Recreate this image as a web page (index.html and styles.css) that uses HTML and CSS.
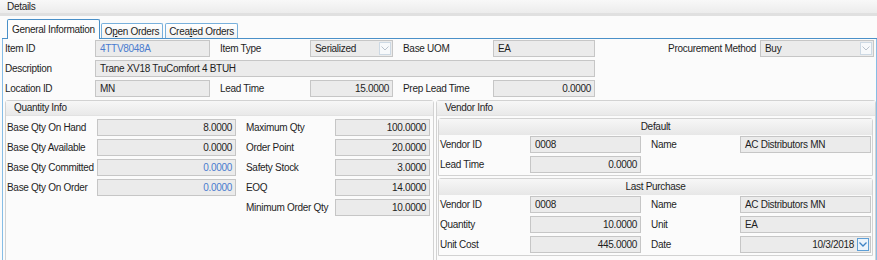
FILE: index.html
```html
<!DOCTYPE html>
<html lang="en">
<head>
  <meta charset="UTF-8">
  <title>Details</title>
  <link rel="stylesheet" href="styles.css">
</head>
<body>

<div class="titlebar">Details</div>

<!-- onglets -->
<div class="tabs">
  <div class="tab active">General Information</div>
  <div class="tab">O<u>p</u>en Orders</div>
  <div class="tab">Crea<u>t</u>ed Orders</div>
</div>

<div class="panel">
  <!-- infos article -->
  <div class="top-grid">
    <span class="lbl">Item ID</span>
    <div class="field link">4TTV8048A</div>
    <span class="lbl pad">Item Type</span>
    <div class="field combo">Serialized
      <span class="drop"><svg width="8" height="5" viewBox="0 0 8 5"><polyline points="0.5,0.5 4,4 7.5,0.5" fill="none" stroke="#b9c2cc" stroke-width="1"/></svg></span>
    </div>
    <span class="lbl pad">Base UOM</span>
    <div class="field">EA</div>
    <span></span>
    <span class="lbl right">Procurement Method</span>
    <div class="field combo">Buy
      <span class="drop"><svg width="8" height="5" viewBox="0 0 8 5"><polyline points="0.5,0.5 4,4 7.5,0.5" fill="none" stroke="#b9c2cc" stroke-width="1"/></svg></span>
    </div>

    <span class="lbl">Description</span>
    <div class="field wide">Trane XV18 TruComfort 4 BTUH</div>
    <span class="fill"></span>

    <span class="lbl">Location ID</span>
    <div class="field">MN</div>
    <span class="lbl pad">Lead Time</span>
    <div class="field num">15.0000</div>
    <span class="lbl pad">Prep Lead Time</span>
    <div class="field num">0.0000</div>
    <span class="fill"></span>
  </div>

  <div class="groups">
    <!-- Quantity Info -->
    <div class="group qty">
      <div class="group-head">Quantity Info</div>
      <div class="qty-grid">
        <span class="lbl">Base Qty On Hand</span>
        <div class="field num">8.0000</div>
        <span class="lbl pad">Maximum Qty</span>
        <div class="field num">100.0000</div>

        <span class="lbl">Base Qty Available</span>
        <div class="field num">0.0000</div>
        <span class="lbl pad">Order Point</span>
        <div class="field num">20.0000</div>

        <span class="lbl">Base Qty Committed</span>
        <div class="field num link">0.0000</div>
        <span class="lbl pad">Safety Stock</span>
        <div class="field num">3.0000</div>

        <span class="lbl">Base Qty On Order</span>
        <div class="field num link">0.0000</div>
        <span class="lbl pad">EOQ</span>
        <div class="field num">14.0000</div>

        <span></span>
        <span></span>
        <span class="lbl pad">Minimum Order Qty</span>
        <div class="field num">10.0000</div>
      </div>
    </div>

    <!-- Vendor Info -->
    <div class="group vendor">
      <div class="group-head">Vendor Info</div>

      <div class="subgroup">
        <div class="sub-head">Default</div>
        <div class="vendor-grid">
          <span class="lbl">Vendor ID</span>
          <div class="field">0008</div>
          <span class="lbl pad">Name</span>
          <div class="field">AC Distributors MN</div>

          <span class="lbl">Lead Time</span>
          <div class="field num">0.0000</div>
        </div>
      </div>

      <div class="subgroup">
        <div class="sub-head">Last Purchase</div>
        <div class="vendor-grid">
          <span class="lbl">Vendor ID</span>
          <div class="field">0008</div>
          <span class="lbl pad">Name</span>
          <div class="field">AC Distributors MN</div>

          <span class="lbl">Quantity</span>
          <div class="field num">10.0000</div>
          <span class="lbl pad">Unit</span>
          <div class="field">EA</div>

          <span class="lbl">Unit Cost</span>
          <div class="field num">445.0000</div>
          <span class="lbl pad">Date</span>
          <div class="field num date">10/3/2018
            <span class="drop blue"><svg width="8" height="5" viewBox="0 0 8 5"><polyline points="0.5,0.5 4,4 7.5,0.5" fill="none" stroke="#3d82c4" stroke-width="1.3"/></svg></span>
          </div>
        </div>
      </div>
    </div>
  </div>
</div>

</body>
</html>
```

FILE: styles.css
```css
body {
  margin: 0;
  background: #fbfbfb;
  font-family: "Liberation Sans", Arial, sans-serif;
  font-size: 10px;
  letter-spacing: -0.3px;
  color: #1e1e1e;
  overflow: hidden;
}

.titlebar {
  height: 13px;
  line-height: 14px;
  padding-left: 7px;
  background: linear-gradient(#f8f8f8, #ececec);
  border-bottom: 3px solid #e0e0e0;
}

/* onglets */
.tabs {
  display: flex;
  align-items: flex-end;
  margin: 3px 0 0 2px;
  padding-left: 5px;
  height: 19px;
  border-bottom: 1px solid #4a90c8;
}

.tab {
  height: 14px;
  line-height: 15px;
  padding: 0 3px;
  margin-right: 2px;
  border: 1px solid #78b0dc;
  border-bottom: none;
  border-radius: 2px 2px 0 0;
  background: linear-gradient(#ffffff, #f2f2f2);
}

.tab.active {
  height: 19px;
  line-height: 19px;
  margin-bottom: -1px;
  margin-right: 1px;
  padding: 0 4px;
  background: #fdfdfd;
  border-color: #4a90c8;
}

.panel {
  margin-left: 2px;
  height: 230px;
  border-left: 1px solid #86bde6;
  border-right: 1px solid #86bde6;
  padding: 1px 2px 0 2px;
}

.lbl {
  white-space: nowrap;
  line-height: 17px;
}

.lbl.pad {
  padding-left: 10px;
}

.lbl.right {
  text-align: right;
  padding-right: 4px;
}

.field {
  position: relative;
  box-sizing: border-box;
  height: 17px;
  line-height: 15px;
  padding: 0 4px;
  background: #ebebeb;
  border: 1px solid #c6c6c6;
  white-space: nowrap;
  overflow: hidden;
}

.field.num {
  text-align: right;
  padding-right: 3px;
}

.link {
  color: #4a7ccf;
}

.field.combo,
.field.date {
  padding-right: 16px;
}

.drop {
  position: absolute;
  right: 1px;
  top: 1px;
  width: 10px;
  height: 11px;
  border: 1px solid #cdd9e4;
  background: #f7f9fb;
  display: flex;
  align-items: center;
  justify-content: center;
}

.drop.blue {
  border-color: #5e9fd6;
  background: #eaf3fb;
}

.top-grid {
  display: grid;
  grid-template-columns: 90px 115px 100px 83px 100px 102px 1fr auto 114px;
  row-gap: 3px;
}

.field.wide {
  grid-column: 2 / 7;
}

.fill {
  grid-column: span 3;
}

/* groupes */
.groups {
  display: flex;
  gap: 2px;
  margin-top: 3px;
  margin-right: -2px;
  height: 170px;
}

.group {
  border: 1px solid #d2d2d2;
  border-radius: 3px 3px 0 0;
  background: #fbfbfb;
}

.group.qty {
  width: 427px;
}

.group.vendor {
  flex: 1;
  padding: 0 1px;
}

.group-head {
  height: 14px;
  line-height: 14px;
  padding-left: 8px;
  background: linear-gradient(#f7f7f7, #e9e9e9);
  border-bottom: 1px solid #e2e2e2;
}

.group.vendor .group-head {
  margin: 0 -1px;
}

.qty-grid {
  display: grid;
  grid-template-columns: 90px 139px 99px 95px;
  row-gap: 3px;
  padding: 3px 0 0 1px;
}

.subgroup {
  margin-top: 2px;
  border: 1px solid #d2d2d2;
  border-radius: 3px 3px 0 0;
  padding: 0 1px 2px 1px;
  margin-right: 1px;
}

.sub-head {
  height: 16px;
  line-height: 16px;
  text-align: center;
  margin: 0 -1px;
  background: linear-gradient(#f7f7f7, #e7e7e7);
}

.vendor-grid {
  display: grid;
  grid-template-columns: 90px 111px 99px 131px;
  row-gap: 3px;
  padding-top: 1px;
}
```
